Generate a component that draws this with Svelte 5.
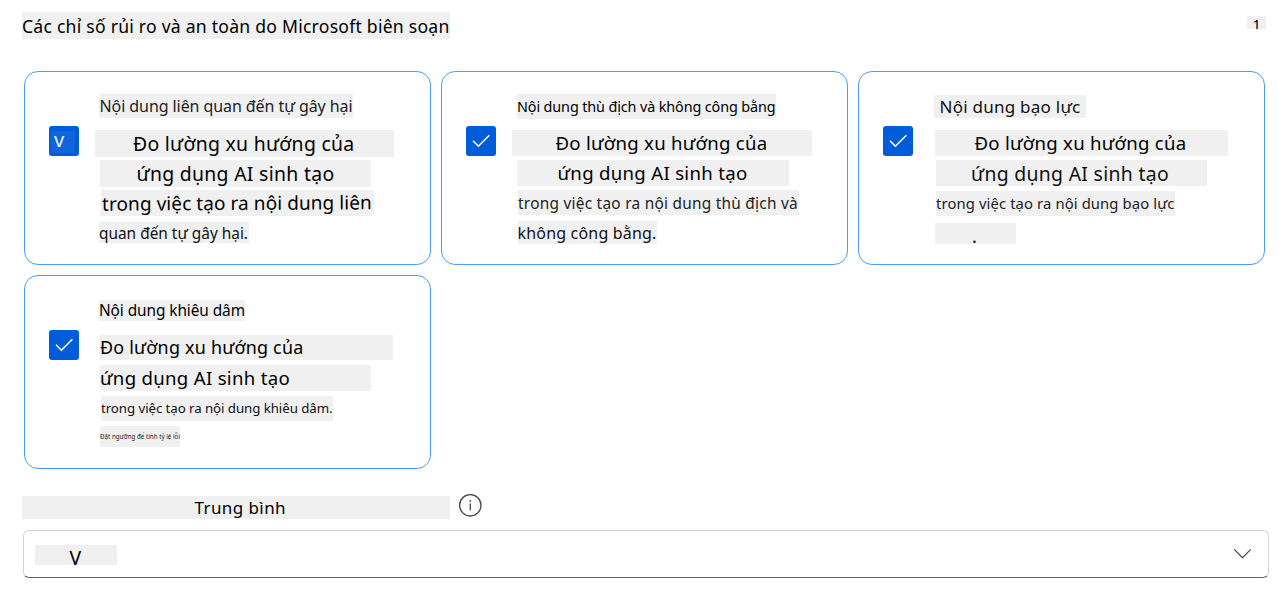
<script>
  // Line: [text, box x, box y, box width, box height, text x, text width, baseline, font size, options]
  // x is relative to the card's text column, y and baseline to the card's top edge.
  const cards = [
    {
      mark: 'v',
      lines: [
        ['Nội dung liên quan đến tự gây hại', 4, 23, 254, 24, 4.5, 253, 42, 16, { tone: 'soft' }],
        ['Đo lường xu hướng của', 0, 59, 299, 27, 38, 221.5, 80.5, 19.4, {}],
        ['ứng dụng AI sinh tạo', 5, 89, 271, 27, 41.5, 198, 111, 19.4, {}],
        ['trong việc tạo ra nội dung liên', 6, 119, 273, 26, 7, 270, 139.5, 19, { tilt: -0.3 }],
        ['quan đến tự gây hại.', 4, 151, 150, 21, 4, 149, 168.5, 15.4, { tone: 'mid' }]
      ]
    },
    {
      mark: 'check',
      lines: [
        ['Nội dung thù địch và không công bằng', 5, 23, 259, 25, 5, 258.5, 42, 14.4, {}],
        ['Đo lường xu hướng của', 0, 59, 300, 26, 43.5, 212, 79.5, 18.6, {}],
        ['ứng dụng AI sinh tạo', 5, 89, 272, 26, 45.5, 190, 109.5, 18.6, {}],
        ['trong việc tạo ra nội dung thù địch và', 6, 119, 281, 25, 6, 280, 138.5, 15.4, { tone: 'soft' }],
        ['không công bằng.', 6, 150, 139, 23, 5.5, 139, 169, 16, { tone: 'mid' }]
      ]
    },
    {
      mark: 'check',
      lines: [
        ['Nội dung bạo lực', 5, 24, 152, 23, 10.5, 141, 42.5, 17, { tone: 'mid' }],
        ['Đo lường xu hướng của', 6, 59, 293, 26, 45.5, 212, 79.5, 18.6, {}],
        ['ứng dụng AI sinh tạo', 7, 89, 271, 26, 42, 198, 111, 19.4, { tone: 'mid' }],
        ['trong việc tạo ra nội dung bạo lực', 7, 120, 239, 25, 7, 238.5, 138.5, 14.8, { tone: 'soft' }],
        ['.', 6, 152, 81, 21, 43, 5, 172, 18, {}]
      ]
    },
    {
      mark: 'check',
      lines: [
        ['Nội dung khiêu dâm', 4, 25, 146, 21, 4, 146, 42, 15.4, {}],
        ['Đo lường xu hướng của', 5, 60, 293, 25, 5, 203.5, 79.3, 17.9, {}],
        ['ứng dụng AI sinh tạo', 5, 90, 271, 26, 5, 190, 110.2, 18.6, {}],
        ['trong việc tạo ra nội dung khiêu dâm.', 6, 121, 232, 25, 6, 231.5, 139, 13.3, { tone: 'mid' }],
        ['Đặt ngưỡng để tính tỷ lệ lỗi', 5, 151, 80, 21, 5, 80, 164, 6.2, { tone: 'soft' }]
      ]
    }
  ];

  const withGaps = (lines) =>
    lines.map(([text, x, y, w, h, tx, tw, base, size, opt], i) => ({
      text,
      box: `margin:${y - (i ? lines[i - 1][2] + lines[i - 1][4] : 1)}px 0 0 ${x}px;width:${w}px;height:${h}px;padding-left:${Math.max(0, tx - x)}px`,
      type: type(size, base - y) + `;margin-left:${Math.min(0, tx - x)}px` + (opt.tilt ? `;transform:rotate(${opt.tilt}deg)` : ''),
      tone: opt.tone ?? '',
      width: tw
    }));

  // Noto Sans puts its baseline 0.388em below the middle of the line box.
  const type = (size, base) => `font-size:${size}px;line-height:${2 * (base - 0.388 * size)}px`;

  // Tracks the text so that it spans the given width.
  function fit(node, width) {
    const natural = node.getBoundingClientRect().width;
    const count = [...node.textContent].length;
    if (count > 1) node.style.letterSpacing = `${(width - natural) / count}px`;
  }
</script>

<main>
  <header>
    <h1 class="hl title"><span use:fit={427.5} style={type(17.6, 21.5)}>Các chỉ số rủi ro và an toàn do Microsoft biên soạn</span></h1>
    <div class="hl count"><span style={type(12.5, 14)}>1</span></div>
  </header>

  <section class="grid">
    {#each cards as card}
      <article class="card">
        <div class="box" class:worn={card.mark === 'v'}>
          {#if card.mark === 'v'}
            <div class="patch"><span>v</span></div>
          {:else}
            <svg width="30" height="30" viewBox="0 0 30 30"><path d="M7 14.8 L12.4 20.2 L23.4 9.2" /></svg>
          {/if}
        </div>
        <div class="lines">
          {#each withGaps(card.lines) as line}
            <div class="hl" style={line.box}><span class={line.tone} use:fit={line.width} style={line.type}>{line.text}</span></div>
          {/each}
        </div>
      </article>
    {/each}
  </section>

  <div class="label">
    <div class="hl threshold"><span use:fit={91.5} style={type(17, 18.5)}>Trung bình</span></div>
    <svg width="24" height="24" viewBox="0 0 24 24">
      <circle cx="12.3" cy="12.3" r="10.7" /><path d="M12.3 10.4 V17.2" /><circle class="dot" cx="12.3" cy="7.9" r="0.9" />
    </svg>
  </div>

  <div class="select">
    <div class="hl value"><span style={type(19.4, 21)}>V</span></div>
    <svg width="20" height="12" viewBox="0 0 20 12"><path d="M1.2 1.3 L9.5 9.7 L17.8 1.3" /></svg>
  </div>
</main>

<style>
  :global(body) {
    background: #fff;
    overflow: hidden;
  }
  main {
    box-sizing: border-box;
    width: 1279px;
    height: 591px;
    padding: 12px 10px 0 22px;
    font-family: 'Noto Sans', sans-serif;
    color: #000;
  }
  .hl {
    box-sizing: border-box;
    background: #f0f0f0;
    display: flex;
    align-items: flex-start;
    white-space: nowrap;
  }
  .hl span {
    display: block;
    flex: none;
  }
  .soft {
    color: #222;
  }
  .mid {
    color: #111;
  }
  header {
    display: flex;
    justify-content: space-between;
    align-items: flex-start;
    height: 59px;
  }
  .title {
    margin: 0;
    width: 428px;
    height: 27px;
    font-weight: 400;
  }
  .count {
    width: 19px;
    height: 13px;
    margin: 4px 3px 0 0;
    padding-left: 6px;
    font-weight: 500;
  }
  .grid {
    display: grid;
    grid-template-columns: repeat(3, 407px);
    grid-auto-rows: 194px;
    gap: 10px;
    margin-left: 2px;
  }
  .card {
    box-sizing: border-box;
    display: flex;
    align-items: flex-start;
    gap: 16px;
    border: 1px solid #479ef5;
    border-radius: 14px;
    padding-left: 24px;
  }
  .box {
    flex: none;
    box-sizing: border-box;
    width: 30px;
    height: 30px;
    margin-top: 54px;
    border-radius: 3px;
    background: #015cda;
  }
  .box svg {
    display: block;
  }
  .box path {
    fill: none;
    stroke: #fff;
    stroke-width: 1.6;
  }
  .worn {
    padding: 5px 4px 3px 2px;
  }
  .patch {
    height: 22px;
    background: #1064dc;
    color: #e8f4ff;
    font-size: 20px;
    line-height: 17px;
    padding-left: 3px;
  }
  .label {
    display: flex;
    align-items: flex-start;
    margin-top: 24px;
    height: 37px;
  }
  .threshold {
    width: 428px;
    height: 23px;
    margin-top: 3px;
    padding-left: 172.5px;
  }
  .label svg {
    margin-left: 8px;
  }
  .label circle,
  .label path {
    fill: none;
    stroke: #424242;
    stroke-width: 1.3;
  }
  .label .dot {
    fill: #424242;
    stroke: none;
  }
  .select {
    box-sizing: border-box;
    display: flex;
    justify-content: space-between;
    align-items: flex-start;
    width: 1246px;
    height: 48px;
    margin-left: 1px;
    padding: 14px 15px 0 11px;
    border: 1px solid #d1d1d1;
    border-bottom-color: #616161;
    border-radius: 6px;
  }
  .value {
    width: 82px;
    height: 20px;
    padding-left: 34.5px;
  }
  .select svg {
    margin-top: 3px;
  }
  .select path {
    fill: none;
    stroke: #424242;
    stroke-width: 1.2;
  }
</style>
